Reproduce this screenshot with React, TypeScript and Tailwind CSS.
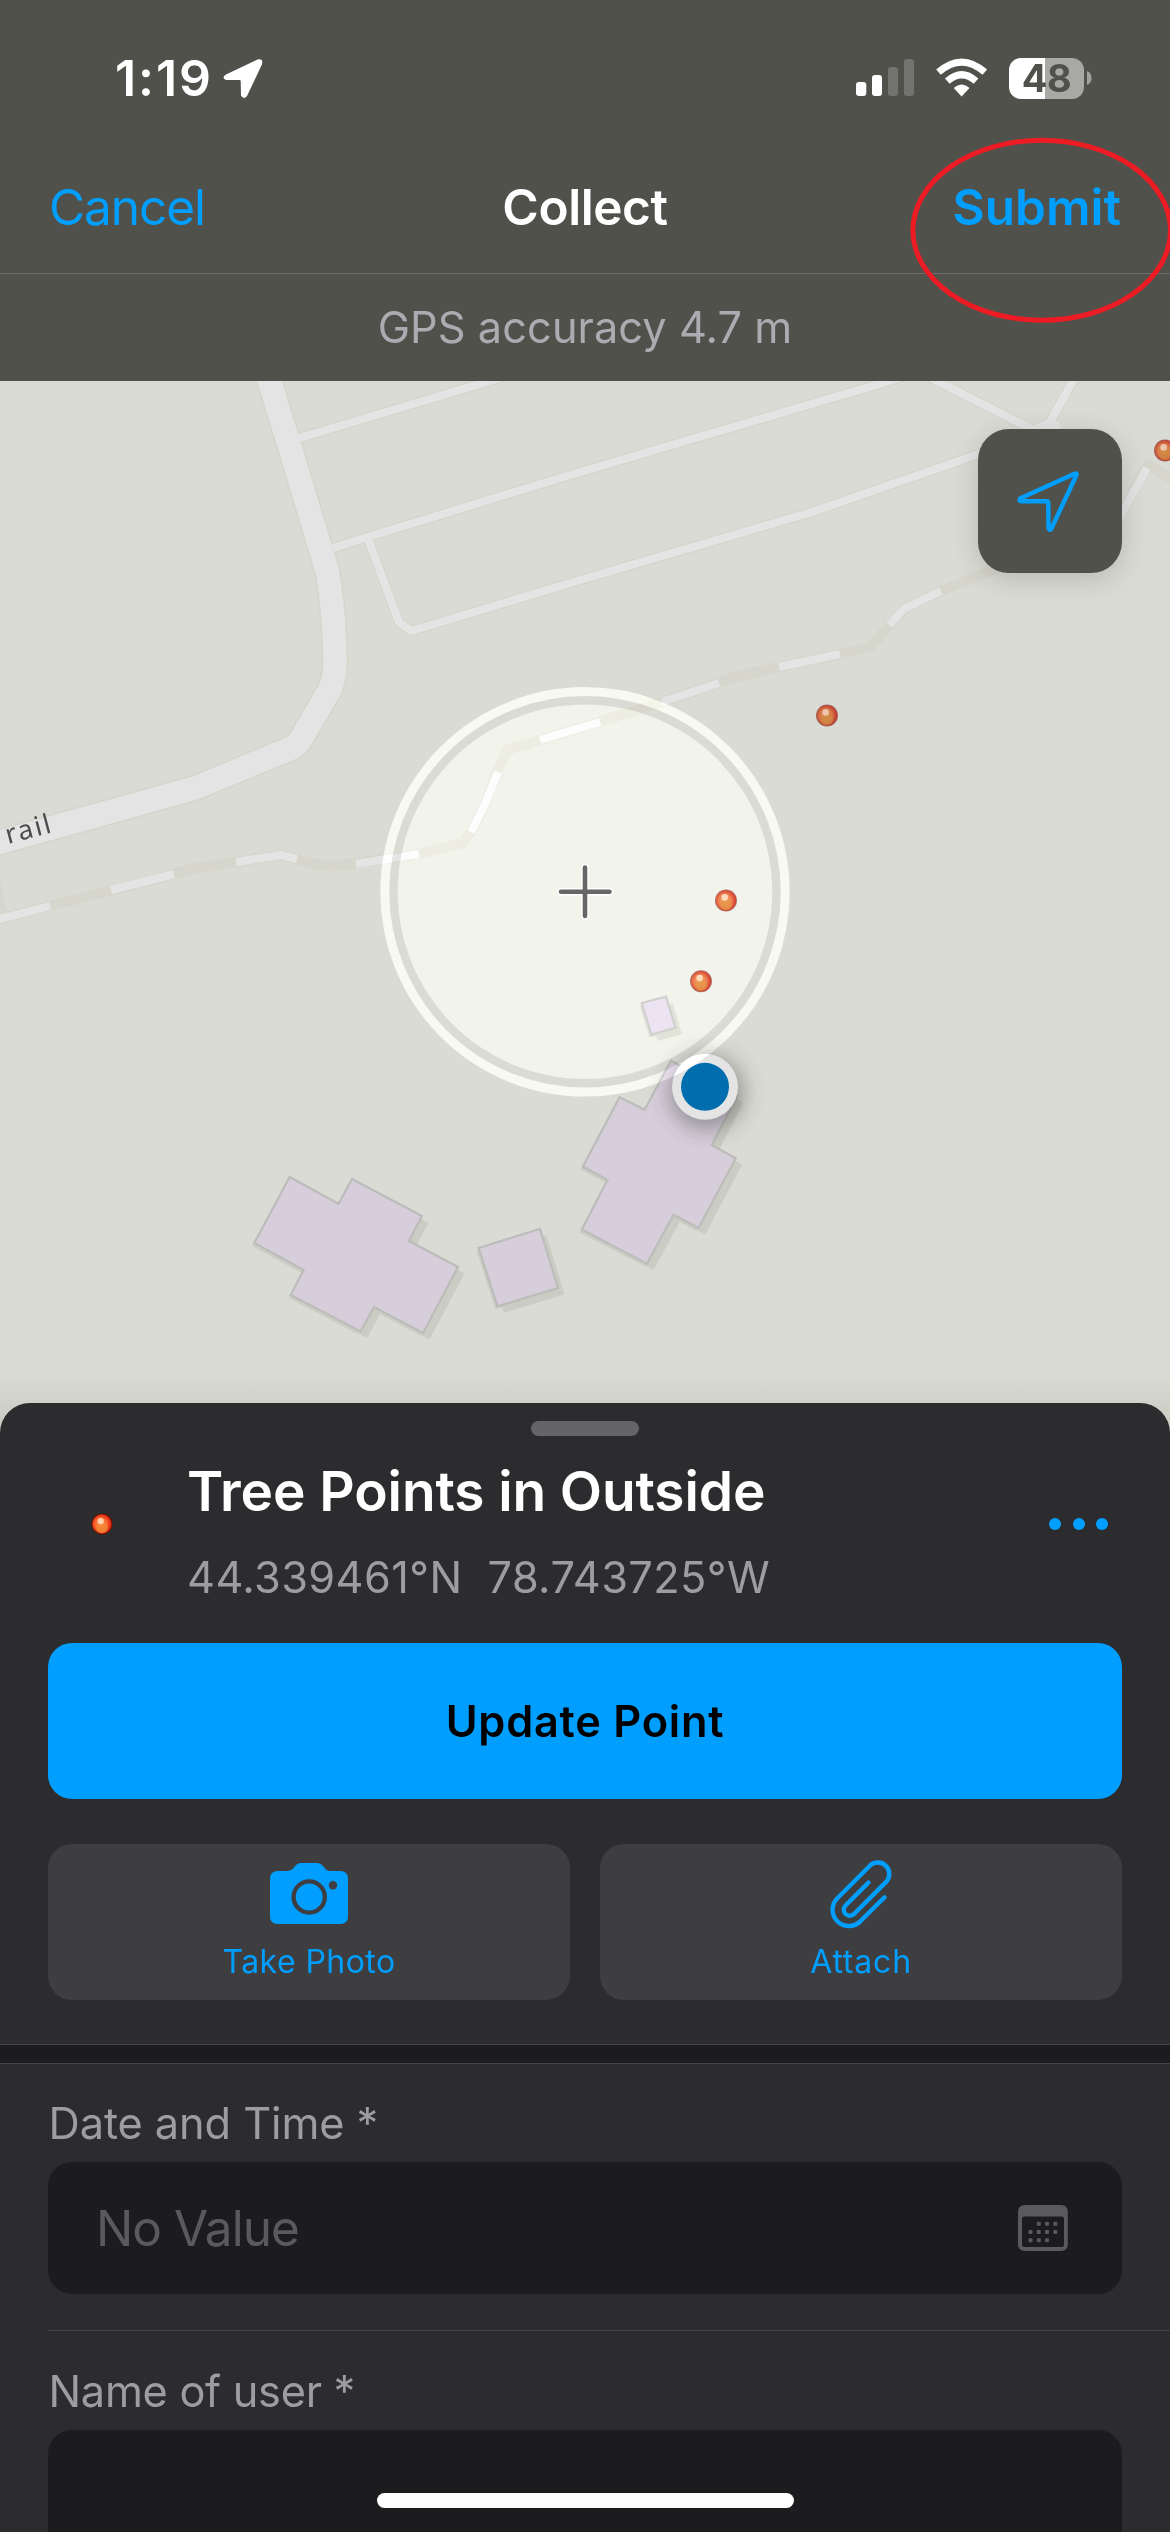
import type { ReactNode } from 'react';

const ROAD_EDGE = '#d5d6ca';
const ROAD_FILL = '#e4e4e4';

const mainRoad = 'M262 357 L288 441 L323 557 Q328 572 329 582 Q335 622 335 662 Q335 680 329 691 L301 739 Q297 746 287 750 L195 788 L-10 845';
const sideRoads = [
  'M299 438 L480 384 L530 368',
  'M333 548 L368 537 L570 475 L876 385 L930 368',
  'M368 539 L399 622 L411 631 L570 583 L809 513 L979 454 L1060 424',
  'M912 368 L1033 430 L1050 422 L1080 368',
];
const trail =
  'M-4 920 L50 906 L113 890 L174 874 L191 869 L236 862 L281 855 L297 859 Q320 867 336 866 L419 854 L463 843 L471 832 L486 802 L497 772 L507 750 L540 740 L599 722 L662 702 L718 683 L734 677 L779 667 L840 654 L870 647 L891 624 L904 609 L941 591 L990 571 L1060 545';
const trailDashes = [
  'M-4 920 L50 906',
  'M111 890 L174 874',
  'M236 862 L281 855 L297 859',
  'M356 864 L419 854',
  'M471 832 L486 802 L498 772',
  'M540 740 L600 722',
  'M662 702 L719 683',
  'M779 667 L840 654',
  'M889 625 L904 609 L941 591',
  'M1110 534 L1147 468',
];
const buildings = [
  '289.6,1177 338.6,1203.7 352,1179 422,1216 409,1241 458,1267 423,1333 374,1307 360.7,1331.4 290.7,1295 303.6,1270 254.3,1243',
  '478.6,1248 540,1228.8 558,1288 497.5,1306.3',
  '619.6,1097.3 644.6,1109.7 671,1060.8 737,1096 711.8,1145 735.7,1158.2 698.6,1228 673.6,1214.7 647,1263.6 581.8,1229.5 607.5,1180 582.9,1166.5',
  '641.8,1003 666,996.7 675.4,1027.7 651.4,1034.6',
];
const treePoints = [
  [1165, 450.5],
  [827, 715.5],
  [726, 900.5],
  [701, 981.2],
];

function Bead({ x, y, r, dim }: { x: number; y: number; r: number; dim?: boolean }) {
  return (
    <g>
      <circle cx={x} cy={y} r={r} fill={dim ? '#9a6a60' : '#5e1405'} />
      <circle cx={x} cy={y} r={r - 0.8} fill={dim ? 'url(#beadDim)' : 'url(#bead)'} />
      <ellipse cx={x} cy={y + r * 0.35} rx={r * 0.55} ry={r * 0.5} fill={dim ? '#cf8840' : '#f08a35'} opacity="0.75" />
      <circle cx={x - r * 0.12} cy={y - r * 0.28} r={r * 0.3} fill={dim ? '#f0d0b8' : '#ffe0c4'} opacity="0.85" />
    </g>
  );
}

function MapView() {
  return (
    <svg className="block h-[1060px] w-full" viewBox="0 381 1170 1060">
      <defs>
        <radialGradient id="beadDim" cx="0.45" cy="0.5" r="0.55">
          <stop offset="0" stopColor="#dd9560" />
          <stop offset="0.55" stopColor="#d6784c" />
          <stop offset="1" stopColor="#c03228" />
        </radialGradient>
        <radialGradient id="bead" cx="0.45" cy="0.5" r="0.55">
          <stop offset="0" stopColor="#ff9a50" />
          <stop offset="0.55" stopColor="#f86a30" />
          <stop offset="1" stopColor="#d81505" />
        </radialGradient>
        <linearGradient id="fade" x1="0" y1="0" x2="0" y2="1">
          <stop offset="0" stopColor="#b8baae" stopOpacity="0" />
          <stop offset="1" stopColor="#b8baae" stopOpacity="0.6" />
        </linearGradient>
        <filter id="soft" x="-60%" y="-60%" width="220%" height="220%">
          <feGaussianBlur stdDeviation="11" />
        </filter>
      </defs>
      <rect x="0" y="381" width="1170" height="1060" fill="#dadbd4" />

      <g fill="none" strokeLinejoin="round">
        {sideRoads.map((d) => (
          <path key={d} d={d} stroke={ROAD_EDGE} strokeWidth="10.5" />
        ))}
        <path d={mainRoad} stroke={ROAD_EDGE} strokeWidth="26.5" />
        {sideRoads.map((d) => (
          <path key={d} d={d} stroke={ROAD_FILL} strokeWidth="8" />
        ))}
        <path d={mainRoad} stroke={ROAD_FILL} strokeWidth="23.5" />
        <path d={trail} stroke="#d6d6cc" strokeWidth="10.5" />
        <path d="M1105 543 L1148 464 L1180 484" stroke="#d6d6cc" strokeWidth="10.5" />
        <path d="M-2 880 L5 918" stroke="#d6d6cc" strokeWidth="5" />
        {trailDashes.map((d) => (
          <path key={d} d={d} stroke={ROAD_FILL} strokeWidth="8" />
        ))}
      </g>

      <text
        transform="translate(8 844) rotate(-15)"
        className="font-['Noto_Sans'] text-[27px]"
        textLength="46"
        fill="#4c4c4c"
      >
        rail
      </text>

      {buildings.map((p) => (
        <g key={p}>
          <polygon points={p} transform="translate(6.5 6.5)" fill="#cbccc3" />
          <polygon points={p} transform="translate(-2 3)" fill="#cbccc3" />
          <polygon points={p} fill="#d6cedb" stroke="#bcbcba" strokeWidth="2.2" />
        </g>
      ))}

      {treePoints.map(([x, y]) => (
        <Bead key={x} x={x} y={y} r={11} dim />
      ))}

      <circle cx="707" cy="1092" r="37" fill="#30302e" opacity="0.42" filter="url(#soft)" />
      <circle cx="705" cy="1086.8" r="33" fill="#e4e4e4" />
      <circle cx="705" cy="1086.8" r="24" fill="#006eae" />

      <g className="mix-blend-color-dodge">
        <circle cx="585" cy="891.8" r="187.3" fill="#191919" />
        <circle cx="585" cy="891.8" r="200.2" fill="none" stroke="#1f1f1f" strokeWidth="9" />
      </g>
      <g strokeLinecap="round" fill="none">
        <path d="M561 891.7 H609.5 M585 867.5 V916" stroke="#ffffff" strokeWidth="7.5" />
        <path d="M561 891.7 H609.5 M585 867.5 V916" stroke="#666666" strokeWidth="4.6" />
      </g>

      <rect x="0" y="1370" width="1170" height="71" fill="url(#fade)" />
    </svg>
  );
}

function StatusBar() {
  return (
    <div className="flex h-[156px] items-center pl-[115px] pr-[78px]">
      <span className="w-[108px] text-[50px] font-semibold leading-none tracking-[1.9px] text-white">1:19</span>
      <svg className="h-10 w-10" viewBox="223 58 40 40">
        <path
          d="M226 74.5 L257.5 59.6 Q263.5 58 262 64.2 L247 96 Q243.6 100 241 95.5 L240.7 81 Q240.6 80 239.6 80 L226 80 Q221 77.5 226 74.5 Z"
          fill="#fff"
        />
      </svg>
      <div className="ml-auto flex h-[42px] items-center">
        <svg className="h-[42px] w-[60px]" viewBox="855 57 60 42">
          <rect x="856" y="82" width="10.3" height="14" rx="3" fill="#fff" />
          <rect x="872" y="75" width="10" height="21" rx="3" fill="#fff" />
          <rect x="888" y="67" width="10" height="29" rx="3" fill="#73736f" />
          <rect x="904" y="59" width="10" height="37" rx="3" fill="#73736f" />
        </svg>
        <svg className="ml-[20px] h-[42px] w-[54px]" viewBox="935 57 54 42">
          <g fill="none" stroke="#fff">
            <path d="M938.5 72.2 Q961.6 52 984.8 72.2" strokeWidth="7" />
            <path d="M947.3 81.2 Q961.6 68.3 976 81.2" strokeWidth="7" />
          </g>
          <path d="M961.6 96.4 L954.2 88.6 Q953.8 87.8 954.6 87.2 Q961.6 82 968.6 87.2 Q969.4 87.8 969 88.6 Z" fill="#fff" />
        </svg>
        <div className="ml-[20px] flex h-[41px] w-[75px] items-center justify-center rounded-[12px] bg-linear-to-r from-white from-[48%] to-[#a8a8a5] to-[48%]">
          <span className="text-[38px] font-bold leading-none tracking-[-0.5px] text-[#51514c]">48</span>
        </div>
        <svg className="ml-[3px] h-[14px] w-[5px]" viewBox="0 0 5 14">
          <path d="M0 0 Q4.6 2 4.6 7 Q4.6 12 0 14 Z" fill="#a0a09d" />
        </svg>
      </div>
    </div>
  );
}

function Header() {
  return (
    <header className="h-[381px] bg-[#51514c]">
      <StatusBar />
      <nav className="grid h-[118px] grid-cols-3 items-center border-b border-[#6c6c69] px-[49px] pb-[14px] text-[49.5px] leading-none text-[#009fff]">
        <span className="tracking-[-1.06px]">Cancel</span>
        <span className="text-center font-semibold tracking-[-0.4px] text-white">Collect</span>
        <span className="text-right font-semibold">Submit</span>
      </nav>
      <p className="h-[107px] text-center text-[43.3px] leading-[106px] tracking-[0.08px] text-[#acabb1]">GPS accuracy 4.7 m</p>
    </header>
  );
}

function Tile({ label, spacing, children }: { label: string; spacing: string; children: ReactNode }) {
  return (
    <button className="flex h-[156px] flex-1 flex-col items-center rounded-[24px] bg-[#3e3e40]">
      {children}
      <span className={`text-[32px] leading-[42px] text-[#009fff] ${spacing}`}>{label}</span>
    </button>
  );
}

function CameraIcon() {
  return (
    <svg className="mt-[11px] mb-[6px] h-20 w-24" viewBox="261 1855 96 80">
      <path
        d="M278 1871 H287 Q291 1871 293.5 1868 L296 1865 Q298 1863 301 1863 H317 Q320 1863 322 1865 L325 1868.5 Q327 1871 330 1871 H340 Q348 1871 348 1879 V1916 Q348 1924 340 1924 H278 Q270 1924 270 1916 V1879 Q270 1871 278 1871 Z"
        fill="#009fff"
      />
      <circle cx="309.2" cy="1897" r="15.6" fill="none" stroke="#3e3e40" strokeWidth="4.3" />
      <circle cx="333" cy="1885.3" r="4.2" fill="#3e3e40" />
    </svg>
  );
}

function PaperclipIcon() {
  return (
    <svg className="mt-[11px] mb-[6px] h-20 w-24" viewBox="813 1855 96 80">
      <path
        d="M884.5 1897.3 L859.6 1922 A16.3 16.3 0 0 1 836.6 1899 L870.4 1865.2 A11.5 11.5 0 0 1 886.6 1881.4 L854 1914 A6 6 0 0 1 845.5 1905.5 L868.5 1882.5"
        fill="none"
        stroke="#009fff"
        strokeWidth="4.4"
        strokeLinecap="round"
        strokeLinejoin="round"
      />
    </svg>
  );
}

const calendarDots = [
  [1038.8, 2223.7], [1047, 2223.7], [1055.3, 2223.7],
  [1030.5, 2232], [1038.8, 2232], [1047, 2232], [1055.3, 2232],
  [1030.5, 2240.2], [1038.8, 2240.2], [1047, 2240.2],
];

function CalendarIcon() {
  return (
    <svg className="h-[46px] w-[50px]" viewBox="1018 2205 50 46">
      <path
        fillRule="evenodd"
        fill="#5a5a5e"
        d="M1025 2205 H1061 Q1067.8 2205 1067.8 2212 V2244 Q1067.8 2251 1061 2251 H1025 Q1018 2251 1018 2244 V2212 Q1018 2205 1025 2205 Z M1024.5 2216.5 Q1022 2216.5 1022 2219 V2244.5 Q1022 2247 1024.5 2247 H1061.5 Q1064 2247 1064 2244.5 V2219 Q1064 2216.5 1061.5 2216.5 Z"
      />
      {calendarDots.map(([x, y]) => (
        <rect key={`${x}-${y}`} x={x - 2} y={y - 2} width="4" height="4" rx="1" fill="#5a5a5e" />
      ))}
    </svg>
  );
}

function Sheet() {
  return (
    <section className="relative -mt-[38px] flex h-[1129px] flex-col overflow-hidden rounded-t-[30px] bg-[#2c2c2e]">
      <div className="mx-auto mt-[18px] h-[15px] w-[108px] shrink-0 rounded-full bg-[#656569]" />
      <div className="flex h-[176px] shrink-0 items-center pl-[89px] pr-[62px]">
        <svg className="h-[26px] w-[26px]" viewBox="-13 -13 26 26">
          <Bead x={0} y={0} r={10.5} />
        </svg>
        <div className="ml-[72px] flex flex-1 flex-col whitespace-pre pt-[20px]">
          <h1 className="text-[55px] font-semibold leading-[86px] tracking-[-0.1px] text-white">Tree Points in Outside</h1>
          <p className="text-[43.3px] leading-[86px] tracking-[0.41px] text-[#9d9ca3]">{'44.339461°N  78.743725°W'}</p>
        </div>
        <div className="flex gap-[11.3px]">
          <i className="h-3 w-3 rounded-full bg-[#009fff]" />
          <i className="h-3 w-3 rounded-full bg-[#009fff]" />
          <i className="h-3 w-3 rounded-full bg-[#009fff]" />
        </div>
      </div>
      <div className="mt-[31px] flex shrink-0 flex-col gap-[45px] px-[48px]">
        <button className="h-[156px] rounded-[24px] bg-[#009fff] pt-[2px] text-[43.3px] font-semibold leading-none tracking-[0.78px] text-black">
          Update Point
        </button>
        <div className="flex gap-[30px]">
          <Tile label="Take Photo" spacing="tracking-[0.44px]">
            <CameraIcon />
          </Tile>
          <Tile label="Attach" spacing="tracking-[0.8px]">
            <PaperclipIcon />
          </Tile>
        </div>
      </div>
      <div className="mt-[44px] h-[20px] shrink-0 border-y border-[#454547] bg-[#1c1c1e]" />
      <div className="ml-[48px] h-[267px] shrink-0 border-b border-[#454547] pr-[48px] pt-[38px]">
        <p className="pl-[0.5px] text-[43.3px] leading-[43px] tracking-[-0.07px] text-[#9d9ca3]">Date and Time *</p>
        <div className="mt-[17px] flex h-[132px] items-center justify-between rounded-[24px] bg-[#1c1c1e] pl-[48px] pr-[54px]">
          <span className="pt-[2px] text-[49.5px] leading-none tracking-[-0.94px] text-[#5a5a5e]">No Value</span>
          <CalendarIcon />
        </div>
      </div>
      <div className="flex flex-1 flex-col px-[48px] pt-[39px]">
        <p className="pl-[0.5px] text-[43.3px] leading-[43px] tracking-[-0.27px] text-[#9d9ca3]">Name of user *</p>
        <div className="mt-[17px] flex flex-1 items-end justify-center rounded-t-[24px] bg-[#1c1c1e] pb-[24px]">
          <div className="h-[15px] w-[417px] rounded-full bg-white" />
        </div>
      </div>
    </section>
  );
}

export default function App() {
  return (
    <main className="relative h-[2532px] w-[1170px] overflow-hidden bg-[#2c2c2e] font-[Inter,sans-serif]">
      <Header />
      <MapView />
      <button className="absolute left-[978px] top-[429px] flex h-36 w-36 items-center justify-center rounded-[31px] bg-[#51514c] shadow-[0_6px_28px_rgba(0,0,0,0.16)]">
        <svg className="mr-[6px] h-[66px] w-[66px]" viewBox="1014 468 66 66">
          <path
            d="M1075 473.6 L1020 498.6 Q1018.6 500.8 1021 501.2 L1046.5 501.2 Q1048.3 501.2 1048.3 503 L1048.5 528 Q1049 531 1051.2 529 L1076.5 475 Q1077 473 1075 473.6 Z"
            fill="none"
            stroke="#009fff"
            strokeWidth="4.4"
            strokeLinejoin="round"
          />
        </svg>
      </button>
      <Sheet />
      <svg className="absolute left-[905px] top-[130px] h-[200px] w-[265px]" viewBox="905 130 265 200">
        <ellipse cx="1041.7" cy="230.3" rx="128.8" ry="90" fill="none" stroke="#ed1c24" strokeWidth="5" />
      </svg>
    </main>
  );
}
